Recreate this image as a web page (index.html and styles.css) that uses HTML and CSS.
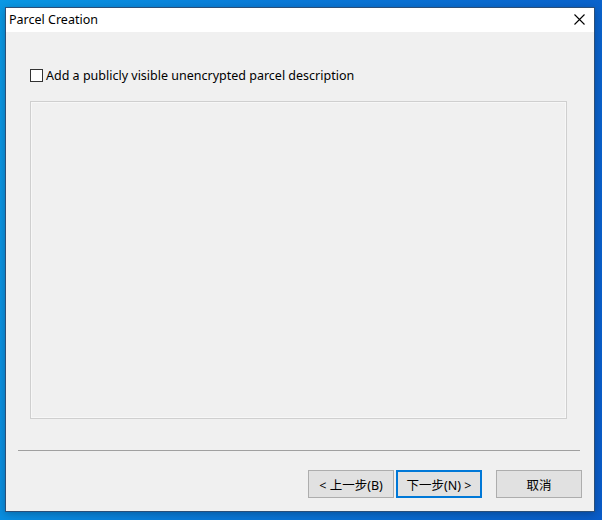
FILE: index.html
```html
<!DOCTYPE html>
<html>
<head>
<meta charset="utf-8">
<link rel="stylesheet" href="styles.css">
</head>
<body>
<div class="window">
  <div class="titlebar">
    <span class="title">Parcel Creation</span>
    <svg class="close" width="11" height="11" viewBox="0 0 11 11"><path d="M0.5 0.5 L10.5 10.5 M10.5 0.5 L0.5 10.5" stroke="#000" stroke-width="1.1" fill="none"/></svg>
  </div>
  <div class="content">
    <label class="check-row">
      <span class="checkbox"></span>
      <span class="check-label">Add a publicly visible unencrypted parcel description</span>
    </label>
    <div class="textbox"></div>
    <div class="separator"></div>
    <div class="buttons">
      <button class="btn">&lt; 上一步(B)</button>
      <button class="btn btn-default">下一步(N) &gt;</button>
      <button class="btn btn-cancel">取消</button>
    </div>
  </div>
</div>
</body>
</html>
```

FILE: styles.css
```css
html, body {
  margin: 0;
  padding: 0;
}
body {
  width: 602px;
  height: 520px;
  overflow: hidden;
  background: linear-gradient(100deg, #0a98e4 0%, #0a7ad8 40%, #0a5cc8 100%);
  font-family: "Noto Sans", "Noto Sans CJK SC", sans-serif;
  font-size: 12.5px;
  color: #000;
}
.window {
  margin: 7px 0 0 5px;
  width: 588px;
  height: 503px;
  border: 1px solid #2b4f78;
  background: #f0f0f0;
  display: flex;
  flex-direction: column;
  box-shadow: 0 2px 8px rgba(0,0,0,0.25);
}
.titlebar {
  height: 24px;
  background: #fff;
  display: flex;
  align-items: center;
  justify-content: space-between;
  padding: 0 9px 0 3px;
}
.title {
  font-size: 12.5px;
  line-height: 24px;
  margin-top: -1px;
}
.close {
  display: block;
  margin-top: -2px;
}
.content {
  flex: 1;
  display: flex;
  flex-direction: column;
  padding-top: 37px;
}
.check-row {
  display: flex;
  align-items: center;
  height: 13px;
  margin-left: 24px;
}
.checkbox {
  width: 11px;
  height: 11px;
  border: 1px solid #333;
  background: #fff;
  flex: none;
}
.check-label {
  margin-left: 3px;
  line-height: 13px;
  white-space: nowrap;
}
.textbox {
  margin: 19px 0 0 24px;
  width: 535px;
  height: 316px;
  border: 1px solid #cfcfcf;
  box-shadow: inset 0 0 0 1px #f7f7f7;
  background: #f0f0f0;
}
.separator {
  margin: 31px 0 0 12px;
  width: 562px;
  height: 1px;
  background: #a0a0a0;
}
.buttons {
  margin-top: 19px;
  display: flex;
  justify-content: flex-end;
  padding-right: 12px;
}
.btn {
  width: 86px;
  height: 28px;
  box-sizing: border-box;
  border: 1px solid #adadad;
  background: #e1e1e1;
  font-family: "Noto Sans", "Noto Sans CJK SC", sans-serif;
  font-size: 12.5px;
  color: #000;
  padding: 0;
  margin: 0;
}
.btn-default {
  border: 2px solid #0078d7;
  margin-left: 2px;
}
.btn-cancel {
  margin-left: 14px;
}
```
